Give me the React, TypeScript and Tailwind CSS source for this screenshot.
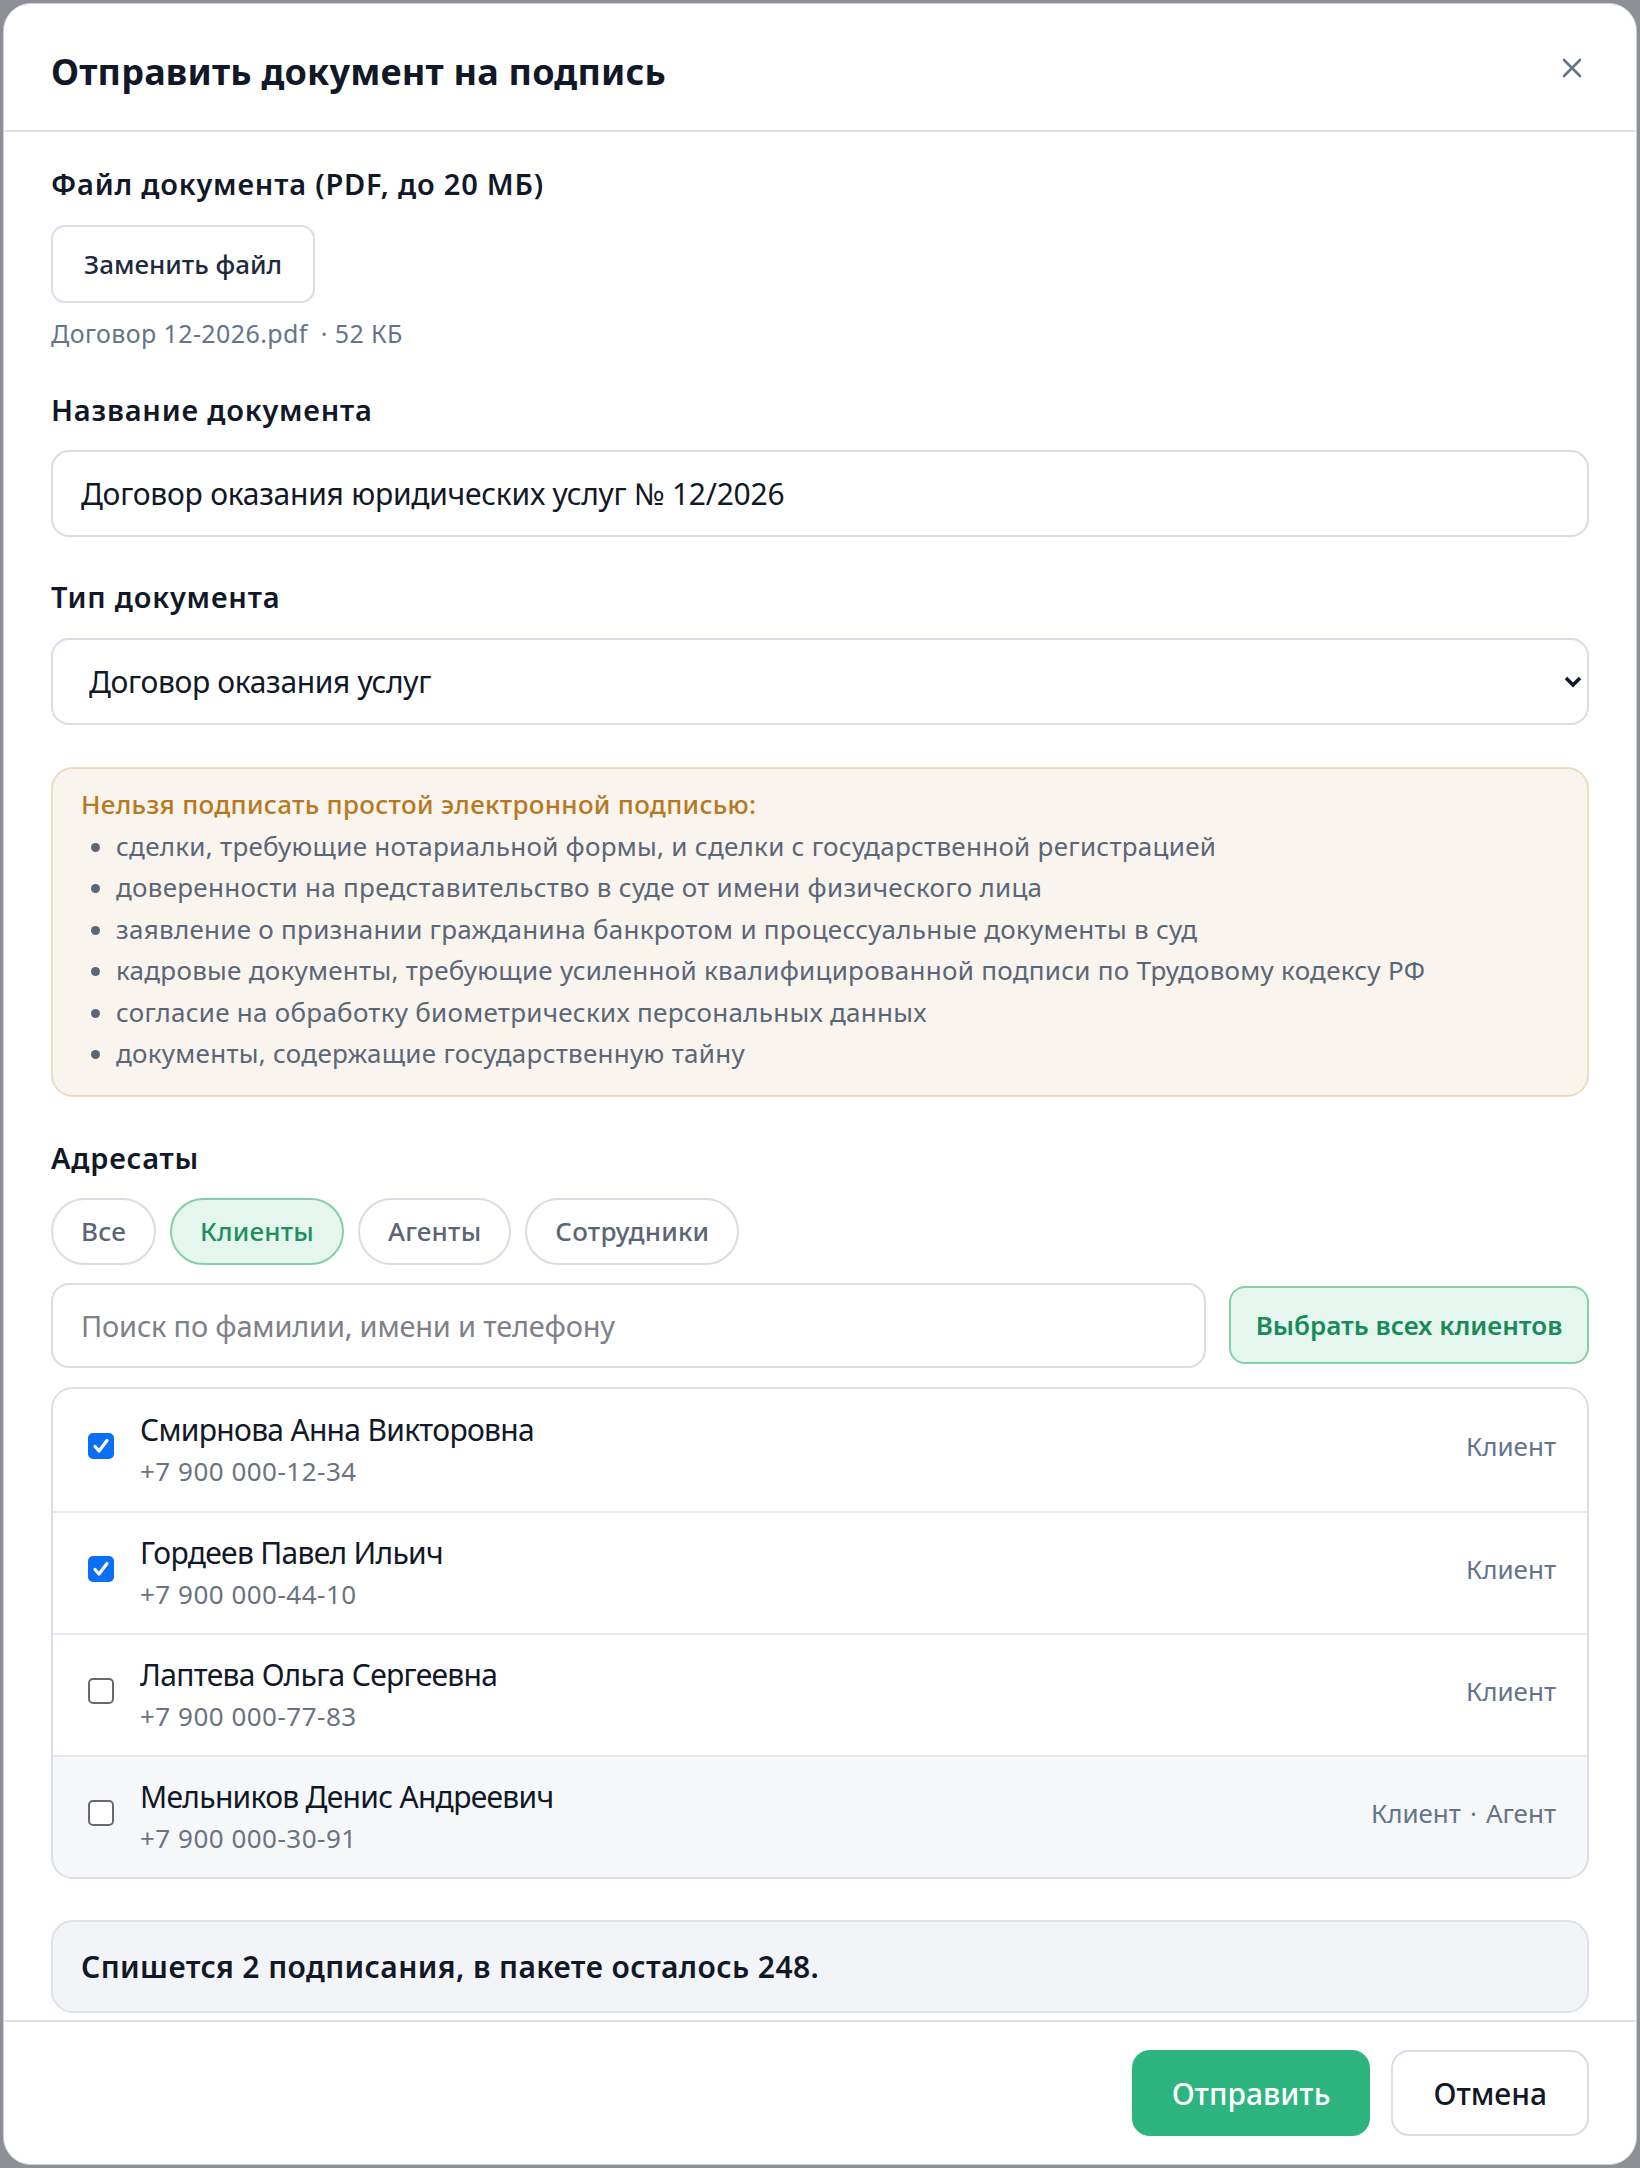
import { useState } from 'react'

type Recipient = {
  id: number
  name: string
  phone: string
  roles: string[]
  checked: boolean
}

const restrictions = [
  'сделки, требующие нотариальной формы, и сделки с государственной регистрацией',
  'доверенности на представительство в суде от имени физического лица',
  'заявление о признании гражданина банкротом и процессуальные документы в суд',
  'кадровые документы, требующие усиленной квалифицированной подписи по Трудовому кодексу РФ',
  'согласие на обработку биометрических персональных данных',
  'документы, содержащие государственную тайну',
]

const initialRecipients: Recipient[] = [
  { id: 1, name: 'Смирнова Анна Викторовна', phone: '+7 900 000-12-34', roles: ['Клиент'], checked: true },
  { id: 2, name: 'Гордеев Павел Ильич', phone: '+7 900 000-44-10', roles: ['Клиент'], checked: true },
  { id: 3, name: 'Лаптева Ольга Сергеевна', phone: '+7 900 000-77-83', roles: ['Клиент'], checked: false },
  { id: 4, name: 'Мельников Денис Андреевич', phone: '+7 900 000-30-91', roles: ['Клиент', 'Агент'], checked: false },
]

const tabs = ['Все', 'Клиенты', 'Агенты', 'Сотрудники']

function Label({ children, className = '' }: { children: React.ReactNode; className?: string }) {
  return (
    <div className={`text-[29px] leading-[40px] font-semibold tracking-[0.8px] text-[#111827] ${className}`}>
      {children}
    </div>
  )
}

function Checkbox({ checked, onChange }: { checked: boolean; onChange: () => void }) {
  return (
    <span className="relative w-[26px] h-[26px] shrink-0 mb-[7px]">
      <input
        type="checkbox"
        checked={checked}
        onChange={onChange}
        className="appearance-none block w-[26px] h-[26px] m-0 rounded-[5px] border-2 border-[#666a70] bg-white checked:bg-[#0b6ff5] checked:border-[#0b6ff5]"
      />
      {checked && (
        <svg
          className="absolute inset-0 pointer-events-none"
          width="26"
          height="26"
          viewBox="0 0 26 26"
          fill="none"
          stroke="white"
          strokeWidth="3.2"
          strokeLinecap="round"
          strokeLinejoin="round"
        >
          <path d="M7 13.5 L11 18 L19 7.5" />
        </svg>
      )}
    </span>
  )
}

export default function App() {
  const [tab, setTab] = useState('Клиенты')
  const [recipients, setRecipients] = useState(initialRecipients)

  const toggle = (id: number) =>
    setRecipients(rs => rs.map(r => (r.id === id ? { ...r, checked: !r.checked } : r)))

  return (
    <div className="min-h-[2168px] bg-[#8c8f96] p-[3px] font-['Noto_Sans',sans-serif]">
      <div className="h-[2162px] bg-white border border-[#cfd4dc] rounded-[28px] overflow-hidden flex flex-col">
        {/* header */}
        <div className="h-[128px] shrink-0 border-b-2 border-[#dde1e9] flex items-center justify-between pl-[47px] pr-[54px] pt-[9px]">
          <h2 className="text-[36px] font-bold text-[#111827] tracking-[0.2px]">Отправить документ на подпись</h2>
          <button type="button" className="text-[#64748b] -mt-[8px]">
            <svg width="20" height="20" viewBox="0 0 20 20" fill="none" stroke="currentColor" strokeWidth="2.6" strokeLinecap="round">
              <path d="M2 2 L18 18 M18 2 L2 18" />
            </svg>
          </button>
        </div>

        {/* body */}
        <div className="flex-1 min-h-0 overflow-hidden px-[47px] pt-[32px] pb-[48px]">
          <Label>Файл документа (PDF, до 20 МБ)</Label>
          <button
            type="button"
            className="mt-[21px] h-[78px] px-[31px] rounded-[14px] border-2 border-[#d8dde6] text-[26px] font-medium text-[#1e293b]"
          >
            Заменить файл
          </button>
          <div className="mt-[14px] text-[25px] leading-[32px] tracking-[0.4px] text-[#64748b]">
            Договор 12-2026.pdf<span className="ml-[13px]">· 52 КБ</span>
          </div>

          <Label className="mt-[41px]">Название документа</Label>
          <input
            defaultValue="Договор оказания юридических услуг № 12/2026"
            className="mt-[20px] w-full h-[87px] rounded-[18px] border-2 border-[#d8dde6] pl-[28px] text-[30px] tracking-[-0.25px] text-[#111827] outline-none"
          />

          <Label className="mt-[40px]">Тип документа</Label>
          <div className="relative mt-[21px]">
            <select
              defaultValue="services"
              className="w-full h-[87px] appearance-none rounded-[18px] border-2 border-[#d8dde6] bg-white pl-[36px] text-[30px] tracking-[-0.35px] text-[#111827] outline-none"
            >
              <option value="services">Договор оказания услуг</option>
              <option value="supply">Договор поставки</option>
              <option value="act">Акт выполненных работ</option>
            </select>
            <svg
              className="absolute right-[7px] top-1/2 -translate-y-1/2 pointer-events-none"
              width="18"
              height="12"
              viewBox="0 0 18 12"
              fill="none"
              stroke="#111827"
              strokeWidth="3.6"
            >
              <path d="M2 2 L9 9 L16 2" />
            </svg>
          </div>

          <div className="mt-[42px] rounded-[22px] border-2 border-[#ecdcc2] bg-[#f9f4ee] pl-[28px] pr-[28px] pt-[15px] pb-[20px]">
            <div className="text-[26px] leading-[41.5px] font-medium tracking-[0.3px] text-[#b7791f]">
              Нельзя подписать простой электронной подписью:
            </div>
            <ul className="list-disc pl-[35px] text-[26px] leading-[41.5px] tracking-[0.27px] text-[#5b6677]">
              {restrictions.map(item => (
                <li key={item}>{item}</li>
              ))}
            </ul>
          </div>

          <Label className="mt-[41px]">Адресаты</Label>
          <div className="mt-[20px] flex gap-[14px]">
            {tabs.map(t => (
              <button
                key={t}
                type="button"
                onClick={() => setTab(t)}
                className={`h-[67px] px-[28px] rounded-full border-2 text-[26px] font-medium tracking-[0.2px] ${
                  tab === t
                    ? 'bg-[#e4f6ed] border-[#84cfaa] text-[#1f8f5f]'
                    : 'bg-white border-[#d8dde6] text-[#5b6577]'
                }`}
              >
                {t}
              </button>
            ))}
          </div>

          <div className="mt-[18px] flex items-center gap-[23px]">
            <input
              placeholder="Поиск по фамилии, имени и телефону"
              className="flex-1 h-[85px] rounded-[18px] border-2 border-[#d8dde6] pl-[28px] text-[29px] tracking-[-0.2px] text-[#111827] placeholder:text-[#7d8189] outline-none"
            />
            <button
              type="button"
              className="w-[360px] h-[78px] rounded-[16px] border-2 border-[#86cfa9] bg-[#e4f6ed] text-[26px] font-semibold text-[#1a8a5a]"
            >
              Выбрать всех клиентов
            </button>
          </div>

          <div className="mt-[19px] rounded-[22px] border-2 border-[#d8dde6] overflow-hidden">
            {recipients.map((r, i) => (
              <label
                key={r.id}
                className={`h-[122px] flex items-center pl-[35px] pr-[31px] ${
                  i > 0 ? 'border-t-2 border-[#e6e9ee]' : ''
                } ${i === recipients.length - 1 ? 'bg-[#f6f7f9]' : 'bg-white'}`}
              >
                <Checkbox checked={r.checked} onChange={() => toggle(r.id)} />
                <div className="ml-[26px] flex-1">
                  <div className="text-[30px] leading-[38px] tracking-[-0.7px] text-[#111827]">{r.name}</div>
                  <div className="mt-[5px] text-[26px] leading-[34px] tracking-[0.5px] text-[#6b7280]">{r.phone}</div>
                </div>
                <div className="mb-[7px] text-[26px] text-[#64748b]">
                  {r.roles.map((role, j) => (
                    <span key={role}>
                      {j > 0 && <span className="mx-[9px]">·</span>}
                      {role}
                    </span>
                  ))}
                </div>
              </label>
            ))}
          </div>

          <div className="mt-[41px] h-[93px] rounded-[22px] border-2 border-[#dde2ea] bg-[#f3f4f7] flex items-center pl-[28px] text-[30px] font-semibold tracking-[0.4px] text-[#111827]">
            Спишется 2 подписания, в пакете осталось 248.
          </div>
        </div>

        {/* footer */}
        <div className="h-[144px] shrink-0 border-t-2 border-[#dde1e9] flex items-center justify-end gap-[21px] pr-[47px]">
          <button
            type="button"
            className="h-[86px] px-[40px] rounded-[18px] bg-[#2eb47f] text-[30px] font-medium text-white"
          >
            Отправить
          </button>
          <button
            type="button"
            className="h-[86px] px-[40px] rounded-[18px] border-2 border-[#d8dde6] bg-white text-[30px] font-medium text-[#111827]"
          >
            Отмена
          </button>
        </div>
      </div>
    </div>
  )
}
